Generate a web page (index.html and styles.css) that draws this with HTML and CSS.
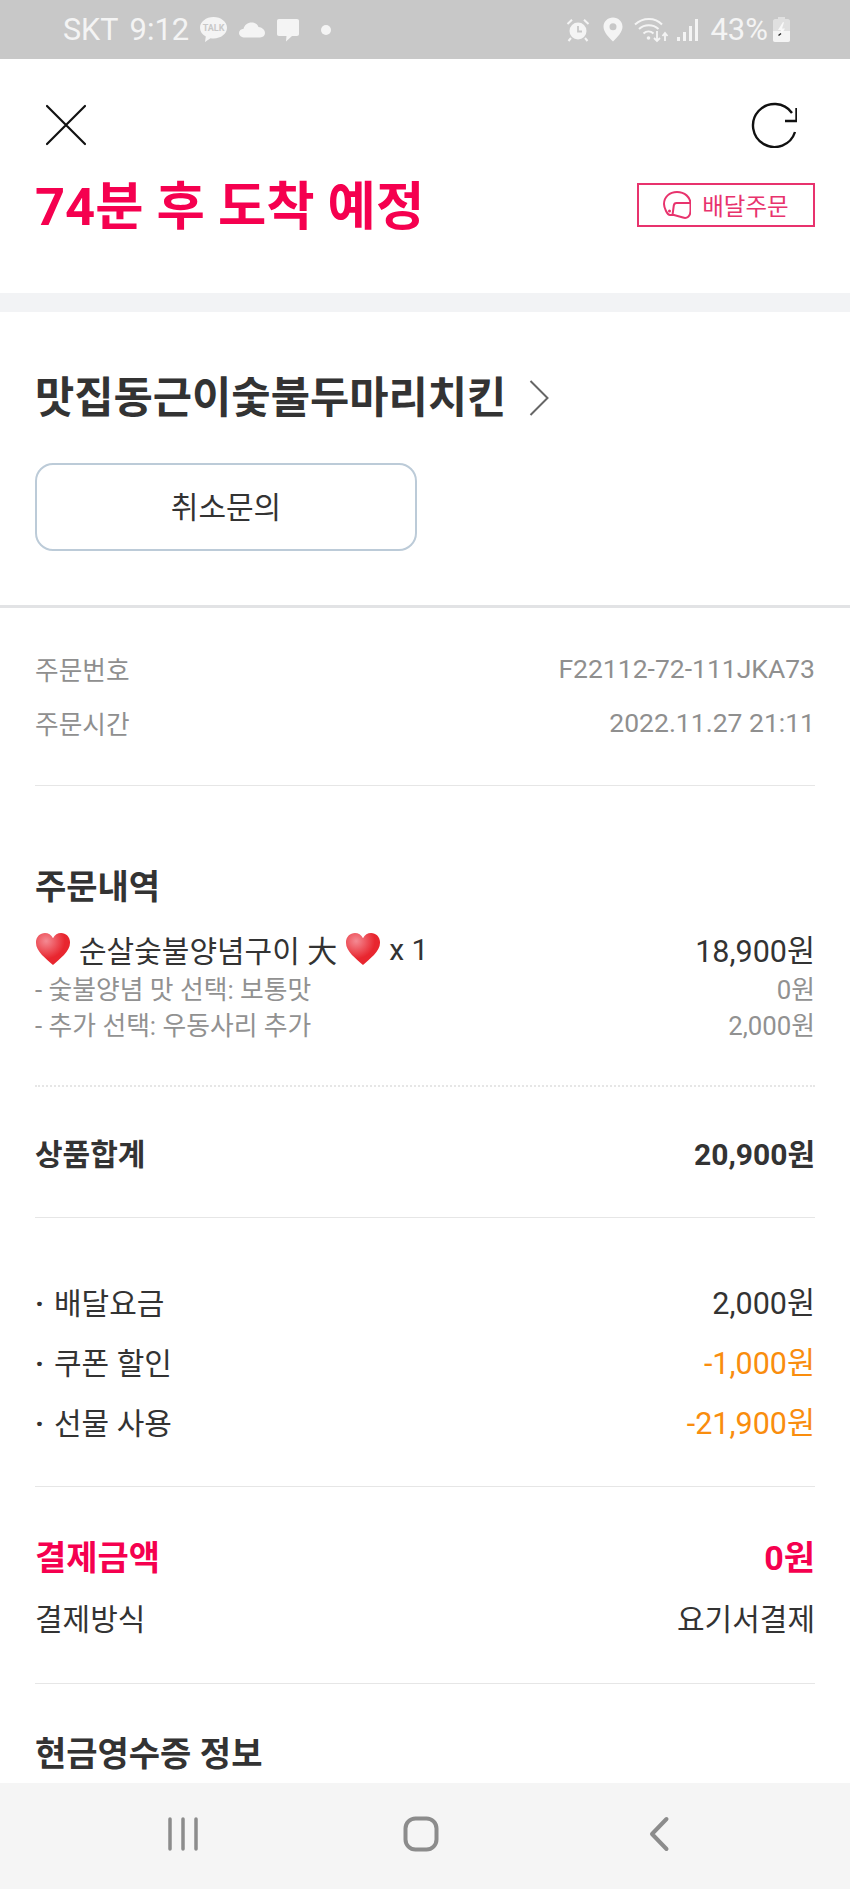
FILE: index.html
```html
<!DOCTYPE html>
<html lang="ko">
  <head>
    <title>주문상세</title>
    <meta charset="utf-8" />
    <link rel="stylesheet" href="styles.css">
  </head>
  <body>
    <div id="screen">
      <div class="status">
        <div class="status-left">
          <span class="carrier">SKT</span>
          <span class="clock">9:12</span>
          <svg class="ic-talk" width="29" height="27" viewBox="0 0 29 27"><path d="M14.5 1C22 1 28 5.800 28 11.800S22 22.500 14.500 22.500c-1 0-2 0-3-.2L6 26l.8-5.600C3 18.500 1 15.400 1 11.800 1 5.800 7 1 14.500 1z" fill="#f4f4f4"/><text x="14.500" y="15" text-anchor="middle" class="talk-txt">TALK</text></svg>
          <svg class="ic-cloud" width="26" height="16" viewBox="0 0 26 16"><path d="M6 15.500C2.500 15.500 0 13.500 0 11c0-2.400 2-4.200 4.600-4.300C5.500 3 8.700.5 12.500.5c3.300 0 6 1.800 7 4.600 3.500.2 6.500 2.800 6.500 6 0 2.600-2 4.400-5 4.400z" fill="#f4f4f4"/></svg>
          <svg class="ic-msg" width="24" height="24" viewBox="0 0 24 24"><path d="M3 1h18c1.300 0 2 .7 2 2v13c0 1.300-.7 2-2 2h-5l-6 5.500.5-5.500H3c-1.300 0-2-.7-2-2V3c0-1.300.7-2 2-2z" fill="#f4f4f4"/></svg>
          <span class="dot"></span>
        </div>
        <div class="status-right">
          <svg width="24" height="24" viewBox="0 0 24 24"><circle cx="12" cy="13" r="8.500" fill="#f4f4f4"/><path d="M12 8v5.500h4" fill="none" stroke="#c8c8c8" stroke-width="1.800"/><path d="M1.500 6L6 1.800M22.500 6L18 1.800M5 20l-2.500 3M19 20l2.500 3" stroke="#f4f4f4" stroke-width="2" fill="none"/></svg>
          <svg class="ic-pin" width="20" height="25" viewBox="0 0 20 25"><path fill-rule="evenodd" d="M10 .5c5.300 0 9.500 4 9.500 9.200 0 5.600-5.500 10.500-9.500 14.800C6 20.200.5 15.300.5 9.700.5 4.500 4.700.5 10 .5zm0 5.700a3.500 3.500 0 1 0 0 7 3.500 3.500 0 0 0 0-7z" fill="#f4f4f4"/></svg>
          <svg class="ic-wifi" width="35" height="27" viewBox="0 0 35 27"><path d="M1 8.500C9 1 21 1 28 8.500M5 13c5.500-5 14-5 19.500 0M9.500 17.500c3-2.800 7-2.800 10 0" fill="none" stroke="#f4f4f4" stroke-width="2"/><circle cx="14.500" cy="22" r="1.800" fill="#f4f4f4"/><path d="M23 15v10m-3-3l3 3 3-3M31 25V17m-2.500 3l2.500-3 2.500 3" fill="none" stroke="#f4f4f4" stroke-width="1.800"/></svg>
          <svg class="ic-signal" width="22" height="24" viewBox="0 0 22 24"><g fill="#f4f4f4"><rect x="0" y="19" width="3" height="4"/><rect x="6" y="14" width="3" height="9"/><rect x="12" y="8" width="3" height="15"/><rect x="18" y="1" width="3" height="22"/></g></svg>
          <span class="percent">43%</span>
          <svg class="ic-batt" width="17" height="25" viewBox="0 0 17 25"><path d="M5 0h7v2h3c1 0 2 1 2 2v19c0 1-1 2-2 2H2c-1 0-2-1-2-2V4c0-1 1-2 2-2h3z" fill="#f4f4f4" opacity=".55"/><path d="M0 14h17v9c0 1-1 2-2 2H2c-1 0-2-1-2-2z" fill="#f4f4f4"/><path d="M10 5L5 13h3l-2 6 1 .5 5-8H9l2-6z" fill="#f8f8f8"/><path d="M5.500 18.500l2.500-2" stroke="#222" stroke-width="1.400"/></svg>
        </div>
      </div>

      <div class="content">
        <header class="top">
          <div class="top-icons">
            <svg class="ic-close" width="42" height="42" viewBox="0 0 42 42"><path d="M2 2l38 38M40 2L2 40" stroke="#111" stroke-width="2.200" fill="none" stroke-linecap="round"/></svg>
            <svg width="46" height="46" viewBox="0 0 46 46"><path d="M44 30A21.500 21.500 0 1 1 41 11" stroke="#111" stroke-width="2.400" fill="none"/><path d="M45.500 6v13H34" stroke="#111" stroke-width="2.400" fill="none"/></svg>
          </div>
          <div class="top-title">
            <h1>74분 후 도착 예정</h1>
            <div class="delivery-tag">
              <svg width="28" height="28" viewBox="0 0 28 28"><path d="M3 20C1.500 17 1 15 1 13 1 6 6.500 1 14 1s13.500 5 13.500 12v7c0 5-3.500 8-7.500 6.500L11 24H7c-2 0-3-2-4-4z" fill="none" stroke="#e8336d" stroke-width="2"/><path d="M27.500 12h-14c-1.500 0-2.500 1-2.700 2.500L9.500 24" fill="none" stroke="#e8336d" stroke-width="2"/><circle cx="6.500" cy="20" r="1.500" fill="#e8336d"/></svg>
              <span>배달주문</span>
            </div>
          </div>
        </header>

        <div class="band"></div>

        <section class="store">
          <div class="store-name">
            <h2>맛집동근이숯불두마리치킨</h2>
            <svg width="20" height="36" viewBox="0 0 20 36"><path d="M1.500 1l17 17-17 17" fill="none" stroke="#666" stroke-width="2"/></svg>
          </div>
          <button class="cancel">취소문의</button>
        </section>

        <section class="meta">
          <div class="row meta-row"><span>주문번호</span><span class="meta-val">F22112-72-111JKA73</span></div>
          <div class="row meta-row"><span>주문시간</span><span class="meta-val">2022.11.27 21:11</span></div>
        </section>

        <section class="order">
          <h3>주문내역</h3>
          <div class="row item">
            <span class="item-name">
              <svg class="heart" viewBox="0 0 38 36" preserveAspectRatio="none"><use href="#heart"/></svg>
              순살숯불양념구이 大
              <svg class="heart" viewBox="0 0 38 36" preserveAspectRatio="none"><use href="#heart"/></svg>
              x 1
            </span>
            <span>18,900원</span>
          </div>
          <div class="row option"><span>- 숯불양념 맛 선택: 보통맛</span><span>0원</span></div>
          <div class="row option"><span>- 추가 선택: 우동사리 추가</span><span>2,000원</span></div>
        </section>

        <section class="subtotal">
          <div class="row strong"><span>상품합계</span><span>20,900원</span></div>
        </section>

        <section class="fees">
          <div class="row fee"><span class="fee-name">배달요금</span><span>2,000원</span></div>
          <div class="row fee"><span class="fee-name">쿠폰 할인</span><span class="minus">-1,000원</span></div>
          <div class="row fee"><span class="fee-name">선물 사용</span><span class="minus">-21,900원</span></div>
        </section>

        <section class="pay">
          <div class="row strong pink"><span>결제금액</span><span>0원</span></div>
          <div class="row pay-way"><span>결제방식</span><span>요기서결제</span></div>
        </section>

        <section class="receipt">
          <h3>현금영수증 정보</h3>
        </section>
      </div>

      <nav class="navbar">
        <svg width="32" height="34" viewBox="0 0 32 34"><path d="M3 2v30M16 2v30M29 2v30" stroke="#8c8c8c" stroke-width="3.500" stroke-linecap="round"/></svg>
        <svg class="ic-home" width="36" height="36" viewBox="0 0 36 36"><rect x="2.500" y="2.500" width="31" height="31" rx="10" fill="none" stroke="#8c8c8c" stroke-width="4"/></svg>
        <svg width="22" height="36" viewBox="0 0 22 36"><path d="M18.500 3L4 18l14.500 15" fill="none" stroke="#8c8c8c" stroke-width="4" stroke-linecap="round" stroke-linejoin="round"/></svg>
      </nav>
    </div>

    <svg class="defs" width="0" height="0">
      <defs>
        <radialGradient id="shine" cx="0.3" cy="0.25" r="0.55">
          <stop offset="0" stop-color="#f48a93"/>
          <stop offset="1" stop-color="#e8262f"/>
        </radialGradient>
        <symbol id="heart" viewBox="0 0 38 36" preserveAspectRatio="none">
          <path d="M19 35C12 28 1 21 1 11 1 5 5.500 1 10.500 1 14 1 17.300 3 19 6.500 20.700 3 24 1 27.500 1 32.500 1 37 5 37 11 37 21 26 28 19 35z" fill="url(#shine)"/>
        </symbol>
      </defs>
    </svg>
  </body>
</html>
```

FILE: styles.css
```css
* {
  box-sizing: border-box;
}
html,
body {
  margin: 0;
  height: 100%;
}
body {
  font-family: Roboto, "Noto Sans CJK KR", sans-serif;
  background-color: #fff;
  color: #333;
}
h1,
h2,
h3 {
  margin: 0;
}
.defs {
  position: absolute;
}
#screen {
  height: 1889px;
  display: flex;
  flex-direction: column;
  overflow: hidden;
}

/* status bar */
.status {
  flex: none;
  height: 59px;
  padding: 0 60px 0 63px;
  display: flex;
  justify-content: space-between;
  align-items: center;
  background-color: #c8c8c8;
  color: #f4f4f4;
  font-size: 31px;
}
.status-left,
.status-right {
  display: flex;
  align-items: center;
}
.carrier {
  font-size: 30.5px;
}
.clock {
  margin-left: 11px;
}
.ic-talk {
  margin-left: 10px;
}
.talk-txt {
  font-size: 9px;
  font-weight: 700;
  fill: #c8c8c8;
}
.ic-cloud {
  margin-left: 11px;
}
.ic-msg {
  margin-left: 11px;
}
.dot {
  width: 10px;
  height: 10px;
  margin-left: 21px;
  margin-right: 2px;
  border-radius: 50%;
  background-color: #f4f4f4;
}
.ic-pin {
  margin-left: 13px;
}
.ic-wifi {
  margin-left: 11px;
}
.ic-signal {
  margin-left: 8px;
}
.percent {
  margin-left: 11px;
}
.ic-batt {
  margin-left: 5px;
}

/* header */
.content {
  flex: 1;
  min-height: 0;
  overflow: hidden;
}
.top {
  height: 234px;
  padding: 43px 35px 0 35px;
}
.top-icons {
  display: flex;
  justify-content: space-between;
  align-items: flex-start;
  height: 73px;
  padding: 0 18px 0 10px;
}
.ic-close {
  margin-top: 2px;
}
.top-title {
  display: flex;
  justify-content: space-between;
  align-items: center;
}
h1 {
  padding-top: 2px;
  font-size: 52.5px;
  line-height: 60px;
  font-weight: 700;
  color: #f5004f;
}
.delivery-tag {
  width: 178px;
  height: 44px;
  margin-bottom: 2px;
  display: flex;
  justify-content: center;
  align-items: center;
  gap: 11px;
  border: 2px solid #e8336d;
  color: #e8336d;
  font-size: 23.5px;
}
.delivery-tag svg {
  flex: none;
}
.band {
  height: 19px;
  background-color: #f2f3f5;
}

/* store */
.store {
  height: 296px;
  padding: 56px 35px 0 35px;
  border-bottom: 3px solid #e2e3e5;
}
.store-name {
  display: flex;
  align-items: center;
  gap: 23px;
  height: 60px;
}
h2 {
  font-size: 42.7px;
  line-height: 60px;
  font-weight: 700;
  color: #333;
}
.cancel {
  display: block;
  width: 382px;
  height: 88px;
  margin-top: 35px;
  padding: 0 0 4px;
  border: 2px solid #bccbd8;
  border-radius: 18px;
  background-color: #fff;
  color: #333;
  font-family: inherit;
  font-size: 30px;
}

/* rows */
.row {
  display: flex;
  justify-content: space-between;
  align-items: center;
}
.meta {
  height: 178px;
  margin: 0 35px;
  padding-top: 33px;
  border-bottom: 1px solid #e6e6e6;
}
.meta-row {
  height: 54px;
  color: #8f8f8f;
  font-size: 25.7px;
}
.meta-val {
  font-size: 26.5px;
}
.order {
  height: 301px;
  margin: 0 35px;
  padding-top: 76px;
  border-bottom: 2px dotted #e6e6e6;
}
h3 {
  font-size: 34px;
  line-height: 50px;
  font-weight: 700;
  color: #333;
}
.item {
  height: 40px;
  margin-top: 17px;
  font-size: 30.5px;
}
.item-name {
  display: flex;
  align-items: center;
  gap: 8px;
  font-size: 30px;
}
.heart {
  width: 36px;
  height: 34px;
}
.option {
  height: 36px;
  color: #919191;
  font-size: 25.8px;
}
.subtotal {
  height: 131px;
  margin: 0 35px;
  display: flex;
  flex-direction: column;
  justify-content: center;
  border-bottom: 1px solid #e6e6e6;
}
.strong {
  font-size: 30px;
  font-weight: 700;
  height: 44px;
}
.fees {
  height: 269px;
  margin: 0 35px;
  padding-top: 53px;
  border-bottom: 1px solid #e6e6e6;
}
.fee {
  height: 60px;
  font-size: 30.5px;
}
.fee-name {
  font-size: 30px;
}
.fee-name::before {
  content: "·";
  display: inline-block;
  width: 19px;
  font-weight: 700;
}
.minus {
  color: #f98d0e;
}
.pay {
  height: 197px;
  margin: 0 35px;
  padding-top: 46px;
  border-bottom: 1px solid #e6e6e6;
}
.pink {
  color: #f5004f;
  font-size: 34px;
}
.pay-way {
  height: 50px;
  margin-top: 15px;
  font-size: 30px;
}
.receipt {
  margin: 0 35px;
  padding-top: 45px;
}

/* nav bar */
.navbar {
  flex: none;
  height: 106px;
  padding: 0 180px 4px 167px;
  display: flex;
  justify-content: space-between;
  align-items: center;
  background-color: #f5f5f5;
}
.ic-home {
  margin-right: 6px;
}
```
